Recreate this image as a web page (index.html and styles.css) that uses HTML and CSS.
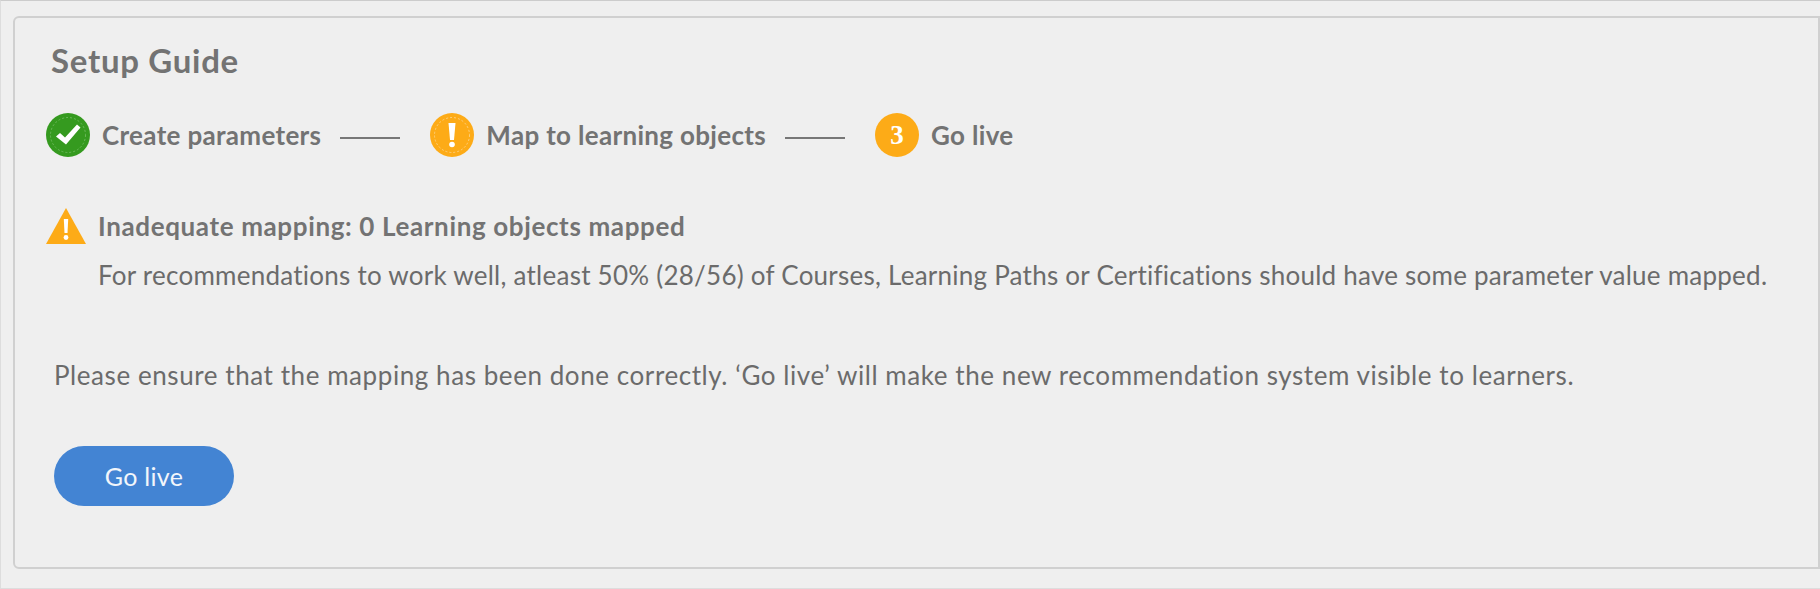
FILE: index.html
```html
<!DOCTYPE html>
<html lang="en">
<head>
  <meta charset="UTF-8">
  <title>Setup Guide</title>
  <link rel="stylesheet" href="styles.css">
</head>
<body>
  <div class="card">
    <h2 class="title">Setup Guide</h2>

    <div class="steps">
      <div class="step">
        <svg class="step-icon" viewBox="0 0 44 44">
          <circle cx="22" cy="22" r="22" fill="#359a1f"/>
          <circle cx="22" cy="22" r="17.5" fill="none" stroke="#6cb85c" stroke-width="1" stroke-dasharray="2 2"/>
          <path d="M10 23.500l4-3.500 5 4.500L31 11.500l3.500 3L20 31.500z" fill="#fff"/>
        </svg>
        <span>Create parameters</span>
      </div>
      <div class="line"></div>
      <div class="step">
        <svg class="step-icon" viewBox="0 0 44 44">
          <circle cx="22" cy="22" r="22" fill="#fdab17"/>
          <circle cx="22" cy="22" r="17.5" fill="none" stroke="#fdd07e" stroke-width="1" stroke-dasharray="2 2"/>
          <path d="M18.500 10h7l-1.500 17h-4z" fill="#fff"/>
          <circle cx="22" cy="31.500" r="2.800" fill="#fff"/>
        </svg>
        <span>Map to learning objects</span>
      </div>
      <div class="line"></div>
      <div class="step">
        <div class="step-num">3</div>
        <span>Go live</span>
      </div>
    </div>

    <div class="warning">
      <svg class="warn-icon" viewBox="0 0 40 36">
        <path d="M20 0L40 36H0z" fill="#fdab17"/>
        <path d="M17.800 11h4.400l-.7 14h-3z" fill="#fff"/>
        <circle cx="20" cy="29.500" r="2.400" fill="#fff"/>
      </svg>
      <div class="warn-head">Inadequate mapping: 0 Learning objects mapped</div>
    </div>
    <p class="warn-text">For recommendations to work well, atleast 50% (28/56) of Courses, Learning Paths or Certifications should have some parameter value mapped.</p>

    <p class="note">Please ensure that the mapping has been done correctly. ‘Go live’ will make the new recommendation system visible to learners.</p>

    <button class="go-btn">Go live</button>
  </div>
</body>
</html>
```

FILE: styles.css
```css
* { box-sizing: border-box; }
html, body { height: 100%; }
body { margin: 0; padding: 15px 0 20px 12px; background: #efefef; border-top: 1px solid #ccc; border-left: 1px solid #ddd; border-bottom: 1px solid #ddd; font-family: Lato, sans-serif; color: #6b6b6b; overflow: hidden; }
.card { height: 553px; border: 2px solid #d0d0d0; border-radius: 6px 0 0 6px; padding: 24px 0 0 36px; }
.title { margin: 0; font-size: 33px; line-height: 36px; font-weight: 700; letter-spacing: .7px; color: #737373; }
.steps { display: flex; align-items: center; margin-top: 35px; margin-left: -5px; font-size: 26px; font-weight: 700; letter-spacing: .32px; color: #737373; }
.step { display: flex; align-items: center; gap: 12px; }
.step-icon, .step-num { width: 44px; height: 44px; flex: none; }
.step-num { border-radius: 50%; background: #fdab17; color: #fff; font-family: "Liberation Serif", serif; font-weight: 700; font-size: 27px; text-align: center; line-height: 44px; letter-spacing: 0; }
.line { width: 60px; height: 2px; background: #777; margin: 6px 30px 0 19px; }
.warning { display: flex; align-items: center; gap: 12px; margin-top: 51px; margin-left: -5px; }
.warn-icon { width: 40px; height: 36px; flex: none; }
.warn-head { font-size: 26px; line-height: 36px; font-weight: 700; letter-spacing: .63px; color: #737373; }
.warn-text { margin: 15px 0 0 47px; font-size: 26px; line-height: 32px; letter-spacing: .245px; white-space: nowrap; }
.note { margin: 68px 0 0 3px; font-size: 26px; line-height: 32px; letter-spacing: .57px; white-space: nowrap; }
.go-btn { display: block; margin: 55px 0 0 3px; width: 180px; height: 60px; border: 0; border-radius: 30px; background: #4384d3; color: #f2f6fb; font-family: inherit; font-size: 25px; letter-spacing: .3px; }
```
